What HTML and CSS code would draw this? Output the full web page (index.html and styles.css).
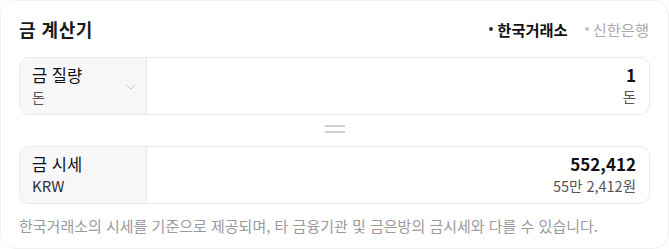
FILE: index.html
```html
<!DOCTYPE html>
<html lang="ko">
<head>
<meta charset="utf-8">
<title>금 계산기</title>
<link rel="stylesheet" href="styles.css">
</head>
<body>
<div class="card">
  <div class="header">
    <h1 class="title">금 계산기</h1>
    <div class="tabs">
      <span class="tab active"><span class="dot"></span>한국거래소</span>
      <span class="tab"><span class="dot"></span>신한은행</span>
    </div>
  </div>
  <div class="row">
    <div class="unit">
      <div class="unit-text">
        <div class="label">금 질량</div>
        <div class="sub">돈</div>
      </div>
      <svg class="chev" width="10" height="6" viewBox="0 0 10 6"><path d="M0.5 0.5 L5 5 L9.5 0.5" fill="none" stroke="#c9c9cc" stroke-width="1"/></svg>
    </div>
    <div class="value">
      <div class="num">1</div>
      <div class="sub">돈</div>
    </div>
  </div>
  <div class="equals">
    <svg width="20" height="8" viewBox="0 0 20 8"><rect x="0" y="0" width="20" height="2" fill="#cfcfd2"/><rect x="0" y="6" width="20" height="2" fill="#cfcfd2"/></svg>
  </div>
  <div class="row">
    <div class="unit">
      <div class="unit-text">
        <div class="label">금 시세</div>
        <div class="sub sub-dark">KRW</div>
      </div>
    </div>
    <div class="value">
      <div class="num">552,412</div>
      <div class="sub">55만 2,412원</div>
    </div>
  </div>
  <p class="note">한국거래소의 시세를 기준으로 제공되며, 타 금융기관 및 금은방의 금시세와 다를 수 있습니다.</p>
</div>
</body>
</html>
```

FILE: styles.css
```css
* { box-sizing: border-box; }
html, body { margin: 0; padding: 0; background: #fff; }
body {
  font-family: "Noto Sans CJK KR", "Noto Sans", sans-serif;
  color: #111;
}
.card {
  width: 669px;
  height: 249px;
  border: 1px solid #f1f1f3;
  border-radius: 16px;
  padding: 15px 18px 0 18px;
  background: #fff;
}
.header {
  display: flex;
  justify-content: space-between;
  align-items: center;
  height: 26px;
  margin-bottom: 15px;
}
.title {
  margin: 0;
  font-size: 18px;
  font-weight: 700;
  line-height: 26px;
  color: #1a1a1a;
  letter-spacing: 0.5px;
}
.tabs {
  display: flex;
  gap: 17px;
  font-size: 15.3px;
  line-height: 26px;
  padding-right: 1px;
}
.tab {
  display: flex;
  align-items: center;
  color: #aaaaae;
}
.tab .dot {
  width: 4px;
  height: 4px;
  border-radius: 50%;
  background: #c4c4c8;
  margin-right: 4px;
}
.tab.active {
  color: #111;
  font-weight: 700;
}
.tab.active .dot { background: #333; }
.row {
  display: flex;
  height: 58px;
  border: 1px solid #e8e8ea;
  border-radius: 10px;
  overflow: hidden;
}
.unit {
  width: 127px;
  flex: none;
  background: #f7f7f9;
  border-right: 1px solid #ebebed;
  display: flex;
  align-items: center;
  justify-content: space-between;
  padding: 0 10px 0 12px;
}
.label {
  font-size: 16.5px;
  line-height: 22px;
  color: #111;
}
.sub {
  font-size: 14.5px;
  line-height: 22px;
  color: #555;
}
.unit .sub { font-size: 14px; }
.sub-dark { color: #333; font-size: 15px !important; }
.chev { margin-top: 1px; }
.value {
  flex: 1;
  display: flex;
  flex-direction: column;
  justify-content: center;
  align-items: flex-end;
  padding-right: 13px;
}
.num {
  font-size: 17px;
  font-weight: 700;
  line-height: 22px;
  color: #111;
}
.equals {
  height: 31px;
  display: flex;
  justify-content: center;
  padding-top: 10px;
}
.equals svg { display: block; }
.note {
  margin: 12px 0 0 0;
  font-size: 15px;
  line-height: 20px;
  color: #9a9a9e;
}
```
